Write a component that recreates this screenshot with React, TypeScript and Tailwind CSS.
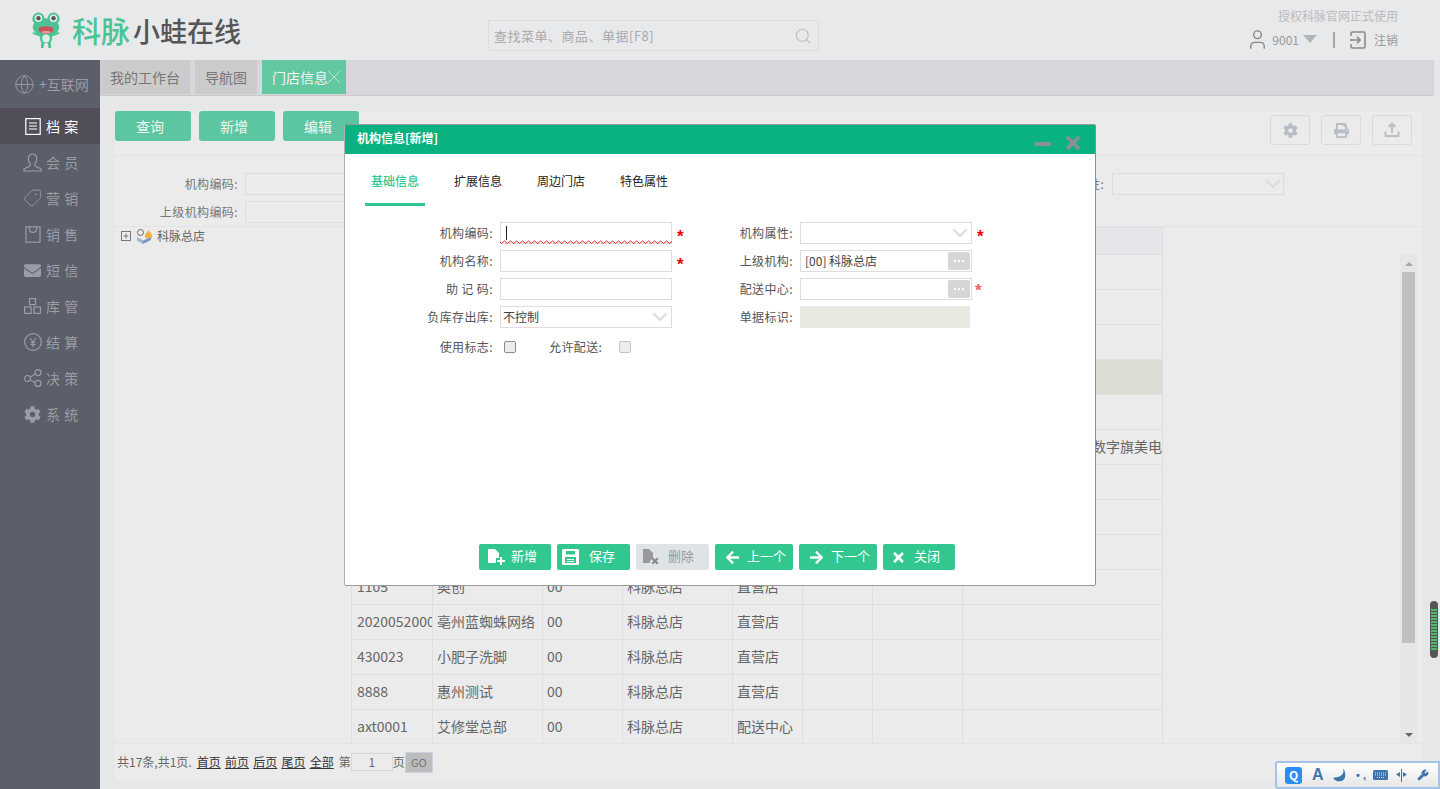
import type { ReactNode } from 'react';
import { Globe, User, Tag, Search, Wrench, X } from 'lucide-react';
import { FaArrowLeft, FaArrowRight, FaTimes, FaCog, FaEnvelope, FaPrint } from 'react-icons/fa';

function Chevron({ className = '' }: { className?: string }) {
  return (
    <svg width="16" height="10" viewBox="0 0 16 10" className={className} fill="none" stroke="#dcdcdc" strokeWidth="2">
      <path d="M1.500 1.500 8 8l6.500-6.500" />
    </svg>
  );
}

function Frog() {
  return (
    <svg width="32" height="38" viewBox="0 0 34 40">
      <circle cx="9" cy="8" r="6.500" fill="#4cc394" />
      <circle cx="25" cy="8" r="6.500" fill="#4cc394" />
      <ellipse cx="17" cy="17" rx="14" ry="9.500" fill="#4cc394" />
      <circle cx="9" cy="7.500" r="4" fill="#e8e9eb" />
      <circle cx="25" cy="7.500" r="4" fill="#e8e9eb" />
      <circle cx="9" cy="7.500" r="2.300" fill="#555" />
      <circle cx="25" cy="7.500" r="2.300" fill="#555" />
      <path d="M9 19c0-4 16-4 16 0 0 3-3 5-8 5s-8-2-8-5z" fill="#c9545a" />
      <path d="M11.500 22.500c2-2 9-2 11 0-3 2-8 2-11 0z" fill="#ef9a96" />
      <path d="M11 24c-1 3-1 7 1 9l-.4 6h2.600l1-5h3.600l1 5h2.600l-.4-6c2-2 2-6 1-9-3 1.600-9 1.600-12 0z" fill="#4cc394" />
      <ellipse cx="17" cy="29" rx="4" ry="4.300" fill="#dff3ea" />
      <path d="M11 26 3 23M23 26l8-3" stroke="#4cc394" strokeWidth="2" />
    </svg>
  );
}

const stroke = { fill: 'none', stroke: '#9a9da5', strokeWidth: 1.2 };

function NavIcon({ name, on }: { name: string; on?: boolean }) {
  if (name === 'doc')
    return (
      <svg width="16" height="17" viewBox="0 0 16 17" fill="none" stroke={on ? '#fff' : '#9a9da5'} strokeWidth="1.200">
        <rect x=".8" y=".6" width="14.400" height="15.800" />
        <path d="M4 5h8M4 8h8M4 11h8" />
      </svg>
    );
  if (name === 'user')
    return (
      <svg width="19" height="19" viewBox="0 0 19 19" {...stroke}>
        <path d="M9.500 1C6.800 1 5.300 3 5.300 6c0 2.200.8 3.800 2 5 .3 1.200-.3 2-1.500 2.600L1 15.800V18h17v-2.200l-4.800-2.200c-1.200-.6-1.800-1.400-1.500-2.600 1.200-1.200 2-2.800 2-5 0-3-1.500-5-4.200-5z" />
      </svg>
    );
  if (name === 'tag') return <Tag size={20} strokeWidth={1.1} color="#9a9da5" className="scale-x-[-1]" />;
  if (name === 'bag')
    return (
      <svg width="16" height="17" viewBox="0 0 16 17" {...stroke}>
        <rect x="1" y=".8" width="14" height="15.400" />
        <path d="M4.500 1v2c0 4.500 7 4.500 7 0V1" />
      </svg>
    );
  if (name === 'mail') return <FaEnvelope size={17} color="#9a9da5" />;
  if (name === 'stock')
    return (
      <svg width="17" height="16" viewBox="0 0 17 16" {...stroke}>
        <rect x="5.500" y=".6" width="6" height="6" />
        <rect x=".6" y="9" width="6.500" height="6.400" />
        <rect x="10" y="9" width="6.500" height="6.400" />
      </svg>
    );
  if (name === 'yen')
    return (
      <svg width="18" height="18" viewBox="0 0 18 18" {...stroke}>
        <circle cx="9" cy="9" r="8.300" />
        <path d="M6 5l3 4 3-4M9 9v5M6.500 9.500h5M6.500 11.500h5" />
      </svg>
    );
  if (name === 'share')
    return (
      <svg width="18" height="18" viewBox="0 0 18 18" {...stroke}>
        <circle cx="3.600" cy="9.500" r="3" />
        <circle cx="14" cy="3.600" r="3" />
        <circle cx="14" cy="14.400" r="3" />
        <path d="m6.200 8 5.200-3M6.200 11l5.200 2.800" />
      </svg>
    );
  return <FaCog size={17} color="#9a9da5" />;
}

const navItems = [
  { icon: 'doc', label: '档 案', on: true },
  { icon: 'user', label: '会 员' },
  { icon: 'tag', label: '营 销' },
  { icon: 'bag', label: '销 售' },
  { icon: 'mail', label: '短 信' },
  { icon: 'stock', label: '库 管' },
  { icon: 'yen', label: '结 算' },
  { icon: 'share', label: '决 策' },
  { icon: 'cog', label: '系 统' },
];

function Sidebar() {
  return (
    <div className="w-[100px] shrink-0 bg-[#5c5f69]">
      <div className="flex h-[48px] items-center gap-[4px] pl-[14px] text-[14px] text-[#9a9da5]">
        <Globe size={21} strokeWidth={1} />
        <span className="mt-[1px] whitespace-nowrap">+互联网</span>
      </div>
      {navItems.map((n) => (
        <div
          key={n.icon}
          className={`flex h-[36px] items-center pl-[23px] ${n.on ? 'bg-[#514e59] text-white' : 'text-[#9a9da5]'}`}
        >
          <span className="flex w-[19px] justify-center">
            <NavIcon name={n.icon} on={n.on} />
          </span>
          <span className="ml-[4px] text-[14px] [word-spacing:1px]">{n.label}</span>
        </div>
      ))}
    </div>
  );
}

function Header() {
  return (
    <div className="flex h-[60px] shrink-0 items-center bg-[#e8e9eb]">
      <div className="flex w-[488px] shrink-0 items-center pl-[30px]">
        <Frog />
        <span className="ml-[10px] text-[29px] leading-none font-medium text-[#4cc394]">科脉</span>
        <span className="ml-[3px] text-[27px] leading-none font-medium text-[#555]">小蛙在线</span>
      </div>
      <div className="mt-[11px] flex h-[31px] w-[331px] items-center justify-between border border-[#dddddd] pr-[6px] pl-[5px] text-[13px] tracking-[0.5px] text-[#aaaaaa]">
        <span>查找菜单、商品、单据[F8]</span>
        <Search size={18} strokeWidth={1.5} color="#c2c2c2" />
      </div>
      <div className="ml-auto flex flex-col items-end pr-[42px]">
        <div className="mt-[-3px] text-[12px] leading-[16px] text-[#bbbbbb]">授权科脉官网正式使用</div>
        <div className="mt-[6px] flex h-[20px] items-center text-[12px] text-[#999999]">
          <User size={23} strokeWidth={1.5} color="#85888c" />
          <span className="ml-[3px]">9001</span>
          <span className="mt-[-2px] ml-[4px] h-0 w-0 border-x-[7.5px] border-t-[8px] border-x-transparent border-t-[#b0b5ba]" />
          <span className="ml-[16px] h-[16px] w-[2px] bg-[#a8a8a8]" />
          <svg className="ml-[14px]" width="18" height="18" viewBox="0 0 18 18" fill="none" stroke="#85888c" strokeWidth="1.500">
            <path d="M2 5V2.500C2 1.600 2.600 1 3.500 1h11c.9 0 1.500.6 1.500 1.500v13c0 .9-.6 1.500-1.500 1.500h-11C2.600 17 2 16.400 2 15.500V13M1 9h10M8 5.800 11.200 9 8 12.200" />
          </svg>
          <span className="mt-[1px] ml-[7px]">注销</span>
        </div>
      </div>
    </div>
  );
}

function Tabs() {
  return (
    <div className="flex h-[36px] w-[1334px] shrink-0 gap-[5px] border-b border-[#c9c9ce] bg-[#d7d7db] pb-[1px] text-[14px]">
      <div className="flex w-[90px] items-center justify-center bg-[#cbcbcb] text-[#777]">我的工作台</div>
      <div className="flex w-[62px] items-center justify-center bg-[#cbcbcb] text-[#777]">导航图</div>
      <div className="flex w-[84px] items-center overflow-hidden bg-[#62c8a1] pl-[10px] whitespace-nowrap text-[#f4f4f4]">
        门店信息
        <X size={22} strokeWidth={0.7} className="ml-[-5px] shrink-0" />
      </div>
    </div>
  );
}

function ToolBtn({ label }: { label: string }) {
  return (
    <div className="flex h-[30px] w-[76px] items-center justify-center rounded-[3px] bg-[#5cc6a0] pr-[6px] text-[14px] text-[#eef8f4]">
      {label}
    </div>
  );
}

function IconBtn({ children }: { children: ReactNode }) {
  return (
    <div className="flex h-[30px] w-[40px] items-center justify-center rounded-[3px] border border-[#dadada]">{children}</div>
  );
}

const rows: { cells: string[]; hl?: boolean }[] = [
  { cells: [] },
  { cells: [] },
  { cells: [] },
  { cells: [], hl: true },
  { cells: [] },
  { cells: ['', '', '', '', '', '', '', '数字旗美电'] },
  { cells: [] },
  { cells: [] },
  { cells: [] },
  { cells: ['1105', '奥创', '00', '科脉总店', '直营店'] },
  { cells: ['2020052000', '亳州蓝蜘蛛网络', '00', '科脉总店', '直营店'] },
  { cells: ['430023', '小肥子洗脚', '00', '科脉总店', '直营店'] },
  { cells: ['8888', '惠州测试', '00', '科脉总店', '直营店'] },
  { cells: ['axt0001', '艾修堂总部', '00', '科脉总店', '配送中心'] },
];
const colWidths = ['w-[81px]', 'w-[110px]', 'w-[80px]', 'w-[110px]', 'w-[70px]', 'w-[70px]', 'w-[90px]', 'w-[200px]'];

function DataTable() {
  return (
    <div className="h-[516px] w-[812px] shrink-0 overflow-hidden">
      <table className="w-[811px] table-fixed border-collapse text-[14px] text-[#666]">
        <colgroup>
          {colWidths.map((w, i) => (
            <col key={i} className={w} />
          ))}
        </colgroup>
        <thead>
          <tr className="h-[27px] bg-[#e5e6ea]">
            {colWidths.map((_, i) => (
              <th key={i} className="border border-[#dfdfdf]" />
            ))}
          </tr>
        </thead>
        <tbody>
          {rows.map((r, i) => (
            <tr key={i} className={`h-[35px] ${r.hl ? 'bg-[#dcdcd5]' : ''}`}>
              {colWidths.map((_, c) => (
                <td
                  key={c}
                  className={`overflow-hidden border border-[#dfdfdf] pb-[2px] whitespace-nowrap ${c === 7 ? 'text-right' : c === 0 ? 'pl-[5px]' : 'px-[4px]'}`}
                >
                  {r.cells[c] ?? ''}
                </td>
              ))}
            </tr>
          ))}
        </tbody>
      </table>
    </div>
  );
}

function TableScrollbar() {
  return (
    <div className="mt-[28px] ml-[237px] flex h-[488px] w-[17px] flex-col items-center bg-[#e6e6e6]">
      <div className="mt-[7px] h-0 w-0 border-x-[4px] border-b-[4px] border-x-transparent border-b-[#a8a8a8]" />
      <div className="mt-[6px] h-[371px] w-[13px] bg-[#c0c0c0]" />
      <div className="mt-auto mb-[6px] h-0 w-0 border-x-[4px] border-t-[4px] border-x-transparent border-t-[#666]" />
    </div>
  );
}

function Pager() {
  return (
    <div className="flex h-[37px] items-center border-t border-[#e4e4e4] pl-[2px] text-[12px] text-[#666]">
      <span>共17条,共1页.</span>
      <span className="ml-[5px] flex gap-[4.25px] text-[#333] underline">
        <span>首页</span>
        <span>前页</span>
        <span>后页</span>
        <span>尾页</span>
        <span>全部</span>
      </span>
      <span className="ml-[5px]">第</span>
      <span className="flex h-[18px] w-[42px] items-center justify-center border border-[#d8d8d8] text-[#7a5a80]">1</span>
      <span>页</span>
      <span className="flex h-[21px] w-[28px] items-center justify-center border border-[#c8d4e0] bg-[#bdbdbd] text-[11px] text-[#777]">GO</span>
    </div>
  );
}

function Panel() {
  return (
    <div className="mt-[15px] ml-[15px] flex h-[669px] w-[1307px] flex-col bg-[#ebebeb]">
      <div className="flex h-[45px] shrink-0 border-b border-[#e3e3e3]">
        <div className="flex h-[30px] gap-[8px]">
          <ToolBtn label="查询" />
          <ToolBtn label="新增" />
          <ToolBtn label="编辑" />
        </div>
        <div className="mt-[4px] ml-auto flex h-[30px] gap-[11px] pr-[10px]">
          <IconBtn>
            <FaCog size={15} color="#b6bdc6" />
          </IconBtn>
          <IconBtn>
            <FaPrint size={15} color="#b6bdc6" />
          </IconBtn>
          <IconBtn>
            <svg width="16" height="16" viewBox="0 0 16 16" fill="none" stroke="#b6bdc6" strokeWidth="1.800">
              <path d="M1.500 9.500v4.500h13V9.500M8 11V2M4.500 5 8 1.800 11.500 5" />
            </svg>
          </IconBtn>
        </div>
      </div>
      <div className="h-[71px] shrink-0 border-b border-[#e3e3e3] pt-[17px] text-[12px] tracking-[0.4px] text-[#777]">
        <div className="flex h-[22px] items-center">
          <span className="w-[125px] pr-[2px] text-right">机构编码:</span>
          <span className="ml-[5px] h-[22px] w-[110px] border border-[#dcdcdc]" />
          <span className="ml-[733px] w-[13px] whitespace-nowrap">性:</span>
          <span className="ml-[11px] flex h-[22px] w-[172px] items-center justify-end border border-[#dcdcdc] pr-[2px]">
            <Chevron />
          </span>
        </div>
        <div className="mt-[6px] flex h-[22px] items-center">
          <span className="w-[125px] pr-[2px] text-right whitespace-nowrap">上级机构编码:</span>
          <span className="ml-[5px] h-[22px] w-[110px] border border-[#dcdcdc]" />
        </div>
      </div>
      <div className="flex h-[516px] shrink-0">
        <div className="flex h-[17px] w-[236px] shrink-0 items-center pl-[6px] text-[12px] text-[#666]">
          <svg width="10" height="10" viewBox="0 0 10 10" fill="none" stroke="#777" strokeWidth="1">
            <rect x=".5" y=".5" width="9" height="9" fill="#eee" />
            <path d="M2.500 5h5M5 2.500v5" />
          </svg>
          <svg className="ml-[5px]" width="16" height="16" viewBox="0 0 16 16">
            <path d="M1 9l6 3.500V16L1 12.500z" fill="#9fb4d8" />
            <path d="M7 12.500 15 9v3l-8 4z" fill="#7f96c0" />
            <circle cx="4.500" cy="4.500" r="3" fill="#eee" stroke="#666" />
            <path d="m9 7 3.500-5L16 7v3H9z" fill="#f2b33d" />
          </svg>
          <span className="ml-[5px]">科脉总店</span>
        </div>
        <DataTable />
        <TableScrollbar />
      </div>
      <Pager />
    </div>
  );
}

function Star({ soft }: { soft?: boolean }) {
  return (
    <span
      className={`font-['Liberation_Sans',sans-serif] text-[17px] leading-none font-bold ${soft ? 'mt-[2px] ml-[3px] text-[#f0606e]' : 'mt-[6px] ml-[5px] text-[#ee0000]'}`}
    >
      *
    </span>
  );
}

function Field({
  label,
  star,
  softStar,
  children,
  box = true,
  left,
}: {
  label: string;
  star?: boolean;
  softStar?: boolean;
  children?: ReactNode;
  box?: boolean;
  left?: boolean;
}) {
  return (
    <div className="flex h-[22px] items-center">
      <span className={`${left ? 'w-[141px]' : 'w-[93px]'} text-right text-[12px] tracking-[0.4px] whitespace-nowrap text-[#555]`}>{label}</span>
      <span className={`relative ml-[7px] flex h-[22px] w-[172px] items-center ${box ? 'border border-[#dedede]' : ''}`}>
        {children}
      </span>
      {star && <Star />}
      {softStar && <Star soft />}
    </div>
  );
}

function Dots() {
  return (
    <span className="absolute top-[1px] right-[1px] flex h-[18px] w-[22px] items-center justify-center gap-[2px] rounded-[2px] bg-[#d6d6d6]">
      <i className="h-[2px] w-[2px] bg-white" />
      <i className="h-[2px] w-[2px] bg-white" />
      <i className="h-[2px] w-[2px] bg-white" />
    </span>
  );
}

function Wave() {
  const d = Array.from({ length: 58 })
    .map((_, i) => `L${i * 3 + 1.5} ${i % 2 ? 1 : 3.5}`)
    .join(' ');
  return (
    <svg className="absolute bottom-[-1px] left-[-1px]" width="172" height="4" viewBox="0 0 172 4" fill="none" stroke="#ee2222" strokeWidth="1">
      <path d={`M0 2 ${d}`} />
    </svg>
  );
}

function Check({ dark }: { dark?: boolean }) {
  return (
    <span className={`block h-[12px] w-[12px] rounded-[2px] border bg-[#ededed] ${dark ? 'border-[#8c8c8c]' : 'border-[#c4c4c4]'}`} />
  );
}

function FootBtn({ icon, label, w, off, pad }: { icon: ReactNode; label: string; w: string; off?: boolean; pad: string }) {
  return (
    <div
      className={`flex h-[26px] ${w} ${pad} items-center rounded-[2px] text-[13px] whitespace-nowrap ${off ? 'bg-[#dfe3e8] text-[#999]' : 'bg-[#32c78f] text-white'}`}
    >
      {icon}
      <span className="pb-[2px]">{label}</span>
    </div>
  );
}

const AddIcon = (
  <svg width="18" height="16" viewBox="0 0 18 16" fill="#fff">
    <path d="M1 0h7l4 4v5H9v5H1z" />
    <path d="M13 8h2v3h3v2h-3v3h-2v-3h-3v-2h3z" />
  </svg>
);
const SaveIcon = (
  <svg width="17" height="16" viewBox="0 0 17 16">
    <path d="M1.500 0h14A1.500 1.500 0 0 1 17 1.500v13a1.500 1.500 0 0 1-1.500 1.500h-14A1.500 1.500 0 0 1 0 14.500v-13A1.500 1.500 0 0 1 1.500 0z" fill="#fff" />
    <path d="M4 2h9v3.500H4zM3 8h11v6H3z" fill="#32c78f" />
    <path d="M5 10h7v1H5zM5 12h7v1H5z" fill="#fff" />
  </svg>
);
const DelIcon = (
  <svg width="18" height="16" viewBox="0 0 18 16" fill="#999">
    <path d="M1 0h6l4 4v5L8 12v2H1z" />
    <path d="m11 10 2 2 2-2 1.500 1.500-2 2 2 2L15 17l-2-2-2 2-1.500-1.500 2-2-2-2z" fill="#888" transform="translate(0 -1.500)" />
  </svg>
);

function Dialog() {
  return (
    <div className="absolute top-[125px] left-[345px] flex h-[460px] w-[750px] flex-col bg-white shadow-[1px_0_0_#8f8f8f,0_1px_0_#9a9a9a,-1px_0_0_#b0b0b0,0_-1px_0_#9a9a9a]">
      <div className="flex h-[29px] shrink-0 items-center bg-[#0ab282] pr-[12px] pl-[12px]">
        <span className="pb-[3px] text-[12px] font-bold text-white">机构信息[新增]</span>
        <span className="mt-[8px] ml-auto h-[4px] w-[16px] bg-[#8a8f9a]" />
        <FaTimes size={20} color="#8a8f9a" className="mt-[6px] ml-[12px]" />
      </div>
      <div className="flex h-[52px] shrink-0 gap-[23px] pl-[20px] text-[12px] text-[#222]">
        {['基础信息', '扩展信息', '周边门店', '特色属性'].map((t, i) => (
          <div
            key={t}
            className={`flex h-[52px] w-[60px] items-center justify-center ${i === 0 ? 'border-b-[3px] border-[#32c792] pt-[5px] font-medium text-[#32c792]' : 'pt-[2px]'}`}
          >
            {t}
          </div>
        ))}
      </div>
      <div className="mt-[16px] flex pl-[7px]">
        <div className="flex w-[348px] flex-col gap-[6px]">
          <Field label="机构编码:" star left>
            <span className="ml-[5px] h-[14px] w-px bg-[#222]" />
            <Wave />
          </Field>
          <Field label="机构名称:" star left />
          <Field label="助 记 码:" left />
          <Field label="负库存出库:" left>
            <span className="ml-[2px] text-[12px] text-[#444]">不控制</span>
            <Chevron className="mr-[3px] ml-auto" />
          </Field>
          <div className="mt-[3px] flex h-[20px] items-center text-[12px] tracking-[0.4px] text-[#555]">
            <span className="w-[141px] text-right">使用标志:</span>
            <span className="ml-[11px]">
              <Check dark />
            </span>
            <span className="ml-[33px]">允许配送:</span>
            <span className="ml-[17px]">
              <Check />
            </span>
          </div>
        </div>
        <div className="flex flex-col gap-[6px]">
          <Field label="机构属性:" star>
            <Chevron className="mr-[3px] ml-auto" />
          </Field>
          <Field label="上级机构:">
            <span className="ml-[4px] text-[12px] text-[#444]">[00] 科脉总店</span>
            <Dots />
          </Field>
          <Field label="配送中心:" softStar>
            <Dots />
          </Field>
          <Field label="单据标识:" box={false}>
            <span className="h-[22px] w-[170px] bg-[#e9e9e2]" />
          </Field>
        </div>
      </div>
      <div className="mt-auto mb-[15px] flex gap-[6px] pl-[134px]">
        <FootBtn icon={AddIcon} label="新增" w="w-[72px]" pad="gap-[6px] pl-[8px]" />
        <FootBtn icon={SaveIcon} label="保存" w="w-[73px]" pad="gap-[10px] pl-[5px]" />
        <FootBtn icon={DelIcon} label="删除" w="w-[73px]" pad="gap-[8px] pl-[6px]" off />
        <FootBtn icon={<FaArrowLeft size={15} />} label="上一个" w="w-[78px]" pad="gap-[7px] pl-[10px]" />
        <FootBtn icon={<FaArrowRight size={15} />} label="下一个" w="w-[78px]" pad="gap-[7px] pl-[10px]" />
        <FootBtn icon={<FaTimes size={15} />} label="关闭" w="w-[72px]" pad="gap-[8px] pl-[8px]" />
      </div>
    </div>
  );
}

function ImeBar() {
  return (
    <div className="absolute right-0 bottom-0 flex h-[28px] w-[165px] items-center rounded-l-[3px] border-2 border-[#a4c3e6] bg-[linear-gradient(#ffffff,#e6e6e6)] pl-[8px] text-[#3f73ad]">
      <span className="flex h-[17px] w-[17px] items-center justify-center rounded-[3px] bg-[#2a8ef5] text-[12px] font-bold text-white">Q</span>
      <span className="ml-[10px] w-[12px] font-['Liberation_Sans',sans-serif] text-[16px] leading-none font-bold">A</span>
      <svg className="ml-[9px]" width="13" height="14" viewBox="0 0 12 13" fill="#3f73ad">
        <path d="M9 0c2 4 0 9-9 9 2 4 9 5 11 0 1-3 0-7-2-9z" />
      </svg>
      <span className="ml-[10px] w-[10px] font-['Liberation_Sans',sans-serif] text-[11px] leading-none font-bold">• ,</span>
      <svg className="ml-[7px]" width="15" height="10" viewBox="0 0 15 10">
        <rect width="15" height="10" rx="1.500" fill="#3f73ad" />
        <path d="M2 3h11M2 5h11M4 7.500h7" stroke="#fff" strokeWidth=".8" strokeDasharray="1 1" />
      </svg>
      <svg className="ml-[8px]" width="11" height="13" viewBox="0 0 11 13" fill="#3f73ad">
        <path d="M5 0v13h1V0zM4 3v5L0 5.500zM7 3v5l4-2.500z" />
      </svg>
      <Wrench size={12} fill="#3f73ad" color="#3f73ad" className="ml-[10px]" />
    </div>
  );
}

export default function App() {
  return (
    <div className="relative flex h-[789px] w-[1440px] flex-col overflow-hidden bg-[#e6e7e9] font-['Noto_Sans_CJK_SC',sans-serif]">
      <Header />
      <div className="flex min-h-0 flex-1">
        <Sidebar />
        <div className="flex-1">
          <Tabs />
          <Panel />
        </div>
      </div>
      <Dialog />
      <div className="absolute top-[601px] right-[2px] h-[57px] w-[8px] rounded-[4px] border-x border-y-[8px] border-[#555] bg-[repeating-linear-gradient(#4cb870_0,#4cb870_2px,#555_2px,#555_3px)]" />
      <ImeBar />
    </div>
  );
}
